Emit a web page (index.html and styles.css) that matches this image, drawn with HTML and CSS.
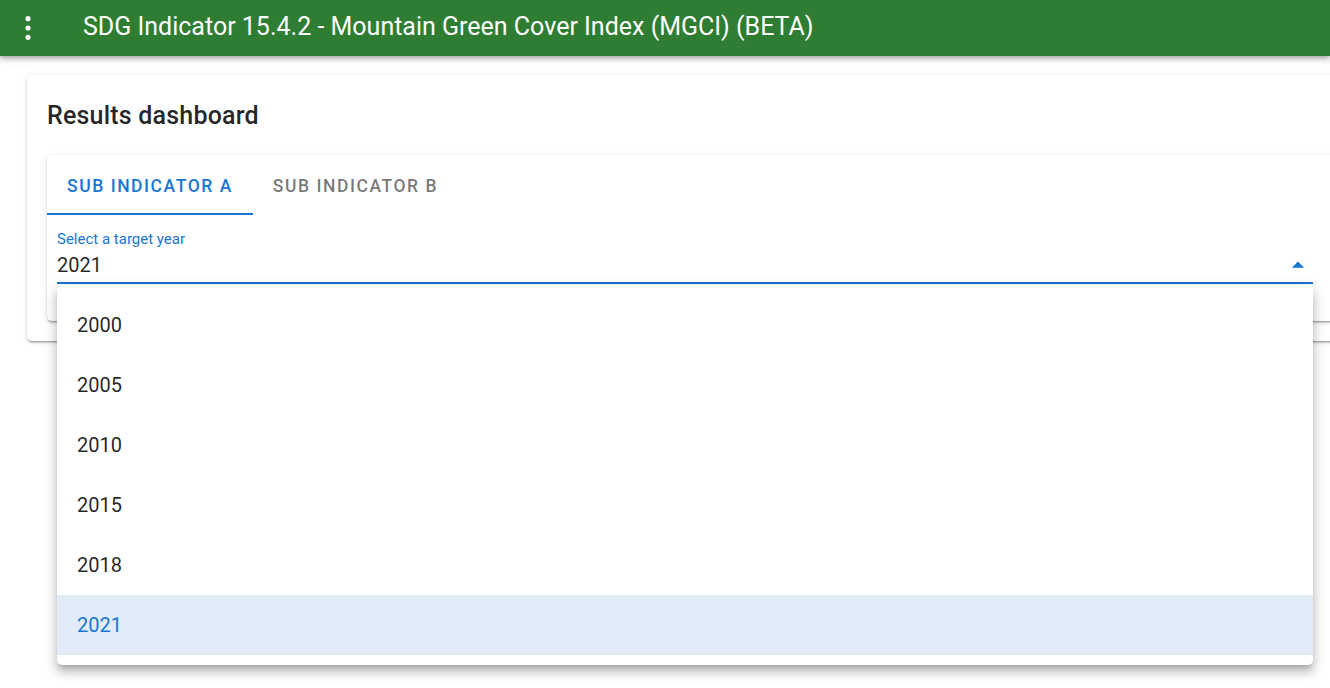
FILE: index.html
```html
<!DOCTYPE html>
<html lang="en">
<head>
 <meta charset="utf-8">
 <title>MGCI Results dashboard</title>
 <link rel="stylesheet" href="styles.css">
</head>
<body>

 <header class="app-bar">
 <button class="icon-btn" aria-label="menu">
 <svg width="28" height="28" viewBox="0 0 24 24"><circle cx="12" cy="4" r="2.2" fill="#fff"/><circle cx="12" cy="12" r="2.2" fill="#fff"/><circle cx="12" cy="20" r="2.2" fill="#fff"/></svg>
 </button>
 <div class="app-title">SDG Indicator 15.4.2 - Mountain Green Cover Index (MGCI) (BETA)</div>
 </header>

 <main class="page">
 <div class="card">
 <h2 class="card-title">Results dashboard</h2>

 <div class="inner-card">
 <div class="tabs">
 <div class="tab active">Sub indicator A</div>
 <div class="tab">Sub indicator B</div>
 </div>

 <div class="field">
 <div class="select">
 <label class="select-label">Select a target year</label>
 <div class="select-row">
 <span class="select-value">2021</span>
 <svg class="caret" width="30" height="30" viewBox="0 0 24 24"><path d="M7,15L12,10L17,15H7Z" fill="#1976d2"/></svg>
 </div>

 <ul class="menu">
 <li class="menu-item">2000</li>
 <li class="menu-item">2005</li>
 <li class="menu-item">2010</li>
 <li class="menu-item">2015</li>
 <li class="menu-item">2018</li>
 <li class="menu-item selected">2021</li>
 </ul>
 </div>
 </div>
 </div>
 </div>
 </main>

</body>
</html>
```

FILE: styles.css
```css
 body {
 margin: 0;
 padding: 0;
 font-family: Roboto, "Liberation Sans", sans-serif;
 background: #fff;
 color: rgba(0, 0, 0, 0.87);
 overflow: hidden;
 height: 688px;
 }

 .app-bar {
 height: 56px;
 background: #2e7d32;
 display: flex;
 align-items: center;
 box-shadow: 0 2px 4px -1px rgba(0, 0, 0, 0.2), 0 4px 5px 0 rgba(0, 0, 0, 0.14), 0 1px 10px 0 rgba(0, 0, 0, 0.12);
 position: relative;
 z-index: 2;
 }

 .icon-btn {
 border: none;
 background: none;
 padding: 0;
 margin-left: 14px;
 width: 28px;
 height: 28px;
 display: flex;
 }

 .app-title {
 color: #fff;
 font-size: 25px;
 margin-left: 41px;
 margin-bottom: 4px;
 white-space: nowrap;
 }

 .page {
 padding: 19px 0 0 27px;
 }

 .card {
 width: 1340px;
 background: #fff;
 border-radius: 5px;
 padding: 21px 20px 20px;
 box-sizing: border-box;
 box-shadow: 0 3px 1px -2px rgba(0, 0, 0, 0.2), 0 2px 2px 0 rgba(0, 0, 0, 0.14), 0 1px 5px 0 rgba(0, 0, 0, 0.12);
 }

 .card-title {
 margin: 0 0 19px;
 font-size: 25px;
 font-weight: 500;
 line-height: 40px;
 letter-spacing: 0.2px;
 }

 .inner-card {
 background: #fff;
 border-radius: 5px;
 box-shadow: 0 3px 1px -2px rgba(0, 0, 0, 0.2), 0 2px 2px 0 rgba(0, 0, 0, 0.14), 0 1px 5px 0 rgba(0, 0, 0, 0.12);
 }

 .tabs {
 display: flex;
 height: 60px;
 }

 .tab {
 padding: 4px 20px 0;
 display: flex;
 align-items: center;
 font-size: 17.5px;
 font-weight: 500;
 letter-spacing: 1.55px;
 text-transform: uppercase;
 color: rgba(0, 0, 0, 0.54);
 box-sizing: border-box;
 border-bottom: 2px solid transparent;
 }

 .tab.active {
 color: #1976d2;
 border-bottom-color: #1976d2;
 }

 .field {
 padding: 15px 10px 37px;
 width: 1256px;
 }

 .select {
 position: relative;
 }

 .select-label {
 display: block;
 font-size: 15px;
 line-height: 18px;
 color: #1976d2;
 }

 .select-row {
 display: flex;
 align-items: center;
 justify-content: space-between;
 height: 31px;
 margin-top: 5px;
 border-bottom: 2px solid #1976d2;
 box-sizing: border-box;
 }

 .select-value {
 font-size: 20px;
 line-height: 24px;
 align-self: flex-start;
 }

 .caret {
 margin-top: -7px;
 }

 .menu {
 position: absolute;
 top: 55px;
 left: 0;
 right: 0;
 margin: 0;
 padding: 10px 0;
 list-style: none;
 background: #fff;
 border-radius: 5px;
 z-index: 5;
 box-shadow: 0 5px 5px -3px rgba(0, 0, 0, 0.2), 0 8px 10px 1px rgba(0, 0, 0, 0.14), 0 3px 14px 2px rgba(0, 0, 0, 0.12);
 }

 .menu-item {
 height: 60px;
 line-height: 60px;
 padding: 0 20px;
 font-size: 20px;
 color: rgba(0, 0, 0, 0.87);
 }

 .menu-item.selected {
 background: #e1ecf8;
 color: #1976d2;
 }
```
